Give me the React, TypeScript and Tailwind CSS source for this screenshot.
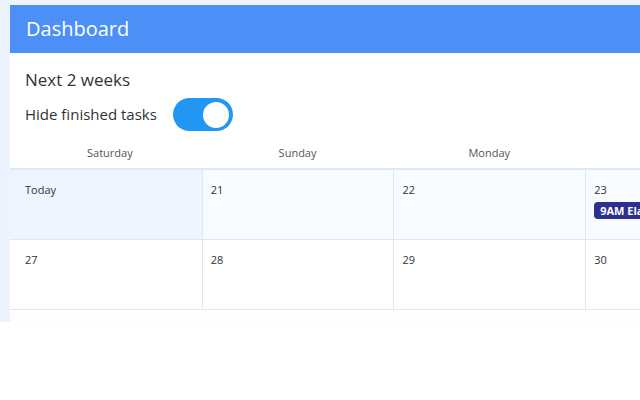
import { useState } from 'react'

const days = ['Saturday', 'Sunday', 'Monday', 'Tuesday', 'Wednesday', 'Thursday', 'Friday']

const weeks = [
  ['Today', '21', '22', '23', '24', '25', '26'],
  ['27', '28', '29', '30', '31', '1', '2'],
]

export default function App() {
  const [hide, setHide] = useState(true)

  return (
    <div className="h-[322px] overflow-hidden bg-[#eef4fd] pl-[10px] pt-[5px] font-['Open_Sans',sans-serif] text-[#333]">
      <div className="h-full w-[1342px] bg-[#fdfdfd]">
        <div className="flex h-12 items-center bg-[#4c8ff7] px-4 text-[20px] text-white">Dashboard</div>
        <div className="bg-white px-[15px] pt-[15px]">
          <div className="text-[17px] leading-6">Next 2 weeks</div>
          <div className="mt-[6px] flex items-center gap-4">
            <span className="text-[15px]">Hide finished tasks</span>
            <button
              onClick={() => setHide(!hide)}
              className={`flex h-[33px] w-[60px] items-center rounded-full px-[4px] ${hide ? 'justify-end bg-[#2196f3]' : 'justify-start bg-gray-300'}`}
            >
              <span className="h-[26px] w-[26px] rounded-full bg-white" />
            </button>
          </div>
        </div>
        <div className="grid h-[37px] grid-cols-7 items-center bg-white pt-[8px] text-[11px] text-[#555]">
          {days.map((d, i) => (
            <div key={d} className={`text-center ${i === 0 ? 'pl-[8px]' : ''}`}>{d}</div>
          ))}
        </div>
        <div className="border-t-2 border-[#dde7f5]">
          {weeks.map((week, wi) => (
            <div key={wi} className={`grid h-[70px] grid-cols-7 border-b border-[#dde7f5] ${wi === 0 ? 'bg-[#f8fbff]' : 'bg-white'}`}>
              {week.map((d, di) => (
                <div
                  key={d}
                  className={`pt-3 text-[11px] leading-4 ${di === 0 ? 'pl-[15px]' : 'border-l border-[#dde7f5] pl-2'} ${wi === 0 && di === 0 ? 'bg-[#eef5fe]' : ''}`}
                >
                  <div>{d}</div>
                  {d === '23' && (
                    <div className="mt-[4px] h-[17px] w-max rounded-sm bg-[#2e2f8f] px-[6px] text-[11px] font-bold leading-[17px] text-white">
                      9AM Elaine's birthday
                    </div>
                  )}
                </div>
              ))}
            </div>
          ))}
        </div>
      </div>
    </div>
  )
}
